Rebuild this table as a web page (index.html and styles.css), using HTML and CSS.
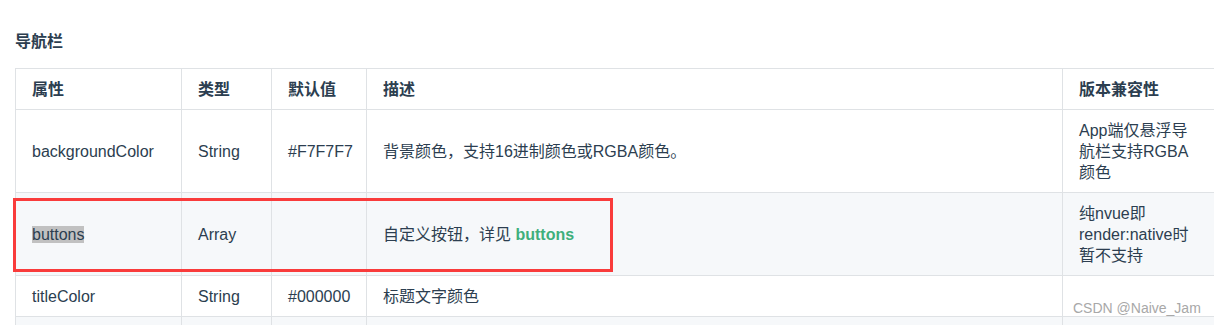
FILE: index.html
```html
<!DOCTYPE html>
<html lang="zh-CN">
<head>
<meta charset="utf-8">
<title>导航栏</title>
<link rel="stylesheet" href="styles.css">
</head>
<body>
<div class="page">
  <h4 class="section-title">导航栏</h4>
  <div class="table-wrap">
    <table class="props">
      <colgroup>
        <col class="c1"><col class="c2"><col class="c3"><col class="c4"><col class="c5">
      </colgroup>
      <thead>
        <tr><th>属性</th><th>类型</th><th>默认值</th><th>描述</th><th>版本兼容性</th></tr>
      </thead>
      <tbody>
        <tr><td>backgroundColor</td><td>String</td><td>#F7F7F7</td><td>背景颜色，支持16进制颜色或RGBA颜色。</td><td><div class="compat"><span class="nw">App端仅悬浮导</span>航栏支持RGBA颜色</div></td></tr>
        <tr><td><span class="hl">buttons</span></td><td>Array</td><td></td><td>自定义按钮，详见 <a class="link">buttons</a></td><td><div class="compat">纯nvue即<span class="nw">render:native时</span>暂不支持</div></td></tr>
        <tr><td>titleColor</td><td>String</td><td>#000000</td><td>标题文字颜色</td><td></td></tr>
        <tr><td></td><td></td><td></td><td></td><td></td></tr>
      </tbody>
    </table>
    <div class="red-box"></div>
  </div>
  <div class="watermark">CSDN @Naive_Jam</div>
</div>
</body>
</html>
```
FILE: styles.css
```css
html, body {
  margin: 0;
  padding: 0;
  background: #fff;
  overflow: hidden;
}
body {
  font-family: "Liberation Sans", "Noto Sans CJK SC", sans-serif;
  color: #2c3e50;
  font-size: 16px;
  line-height: 21px;
}
.page {
  padding: 31px 0 0 15px;
  position: relative;
  height: 325px;
  box-sizing: border-box;
}
.section-title {
  margin: 0 0 15px 0;
  font-size: 16px;
  line-height: 22px;
  font-weight: 700;
}
.table-wrap {
  position: relative;
  width: 1240px;
}
.props {
  border-collapse: collapse;
  table-layout: fixed;
  width: 1217px;
}
.c1 { width: 166px; }
.c2 { width: 90px; }
.c3 { width: 95px; }
.c4 { width: 696px; }
.c5 { width: 170px; }
.props th, .props td {
  border: 1px solid #dfe2e5;
  padding: 9.5px 16px;
  text-align: left;
  vertical-align: middle;
  line-height: 21px;
  height: 21px;
}
.props th {
  font-weight: 700;
}
.props tbody tr:nth-child(2n) {
  background: #f6f8fa;
}
.compat {
  width: 120px;
}
.nw {
  white-space: nowrap;
}
.hl {
  background: #c1c1c1;
}
.link {
  color: #3eaf7c;
  font-weight: 700;
}
.red-box {
  position: absolute;
  left: -2px;
  top: 130px;
  width: 600px;
  height: 74px;
  box-sizing: border-box;
  border: 3px solid #f93b3b;
}
.watermark {
  position: absolute;
  left: 1073px;
  top: 298px;
  font-family: "Liberation Sans", sans-serif;
  font-size: 14px;
  line-height: 20px;
  color: #a8a8a8;
}
```
